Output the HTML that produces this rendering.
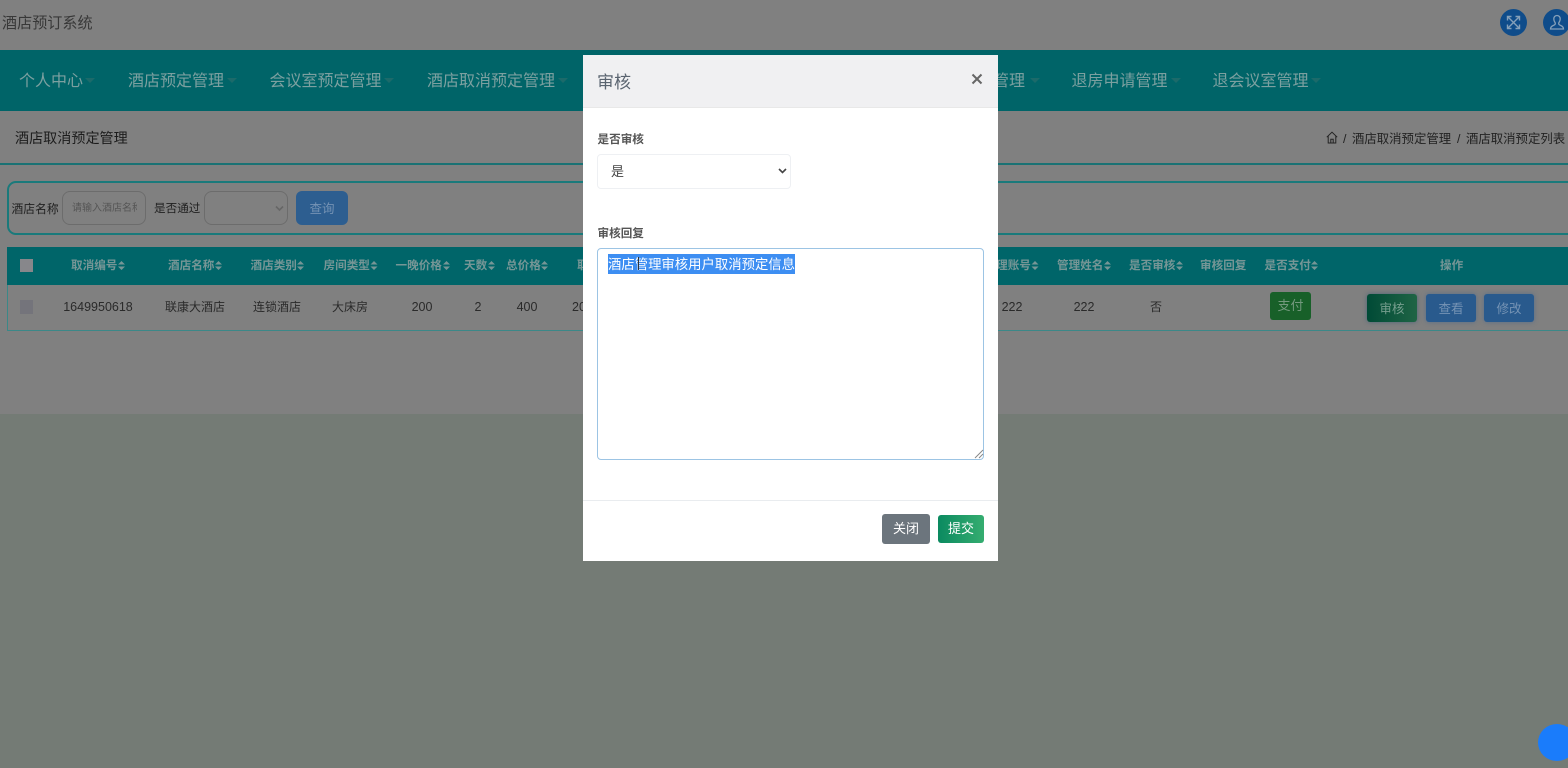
<!DOCTYPE html>
<html lang="zh">
<head>
<meta charset="utf-8">
<title>酒店预订系统</title>
<style>
html,body{margin:0;padding:0;width:1568px;height:768px;overflow:hidden;background:#747b75;}
body{position:relative;font-family:"Liberation Sans","Noto Sans CJK SC",sans-serif;color:#222;}
.a{position:absolute;white-space:nowrap;}
.c{position:absolute;white-space:nowrap;transform:translateX(-50%);}
.nav{font-size:16px;line-height:22px;top:71px;color:#7ca0a0;}
.caret{position:absolute;top:78px;width:0;height:0;border-left:5px solid transparent;border-right:5px solid transparent;border-top:5px solid #1c6a6a;}
.th{font-size:11.6px;font-weight:700;line-height:16px;top:258px;color:#769696;}
.td{font-size:12.5px;line-height:18px;top:298px;color:#2a2a2a;}
.btn{position:absolute;border-radius:3px;text-align:center;font-size:12.5px;box-sizing:border-box;}
.lbl{font-size:11.6px;font-weight:700;color:#555;line-height:16px;}
</style>
</head>
<body>
<!-- page backdrop -->
<div class="a" style="left:0;top:0;width:1568px;height:50px;background:#808080;"></div>
<div class="a" style="left:0;top:49.5px;width:1568px;height:61.5px;background:#006468;"></div>
<div class="a" style="left:0;top:111px;width:1568px;height:303px;background:#808080;"></div>
<div class="a" style="left:0;top:414px;width:1568px;height:354px;background:#747b75;"></div>

<!-- header -->
<div class="a" style="left:2px;top:14px;font-size:15.1px;line-height:20px;color:#383838;">酒店预订系统</div>
<div class="a" style="left:1500px;top:9px;width:27px;height:27px;border-radius:50%;background:#0f4c8a;"></div>
<svg class="a" style="left:1506px;top:15px;" width="15" height="15" viewBox="0 0 15 15" fill="none" stroke="#86a0b9" stroke-width="1.4">
<path d="M2 2L13 13M13 2L2 13M1.5 5.5V1.5H5.5M9.5 1.5H13.5V5.5M13.5 9.5V13.5H9.5M5.5 13.5H1.5V9.5"/>
</svg>
<div class="a" style="left:1543px;top:9px;width:27px;height:27px;border-radius:50%;background:#0f4c8a;"></div>
<svg class="a" style="left:1548px;top:14px;" width="18" height="17" viewBox="0 0 18 17" fill="none" stroke="#86a0b9" stroke-width="1.3">
<path d="M9 1.5C6.8 1.5 5.8 3.2 5.8 5C5.8 7 6.8 8.2 7.3 9C7.5 10 7 10.8 5.5 11.4C3.8 12.1 2.5 12.8 2.5 15H15.5C15.5 12.8 14.2 12.1 12.5 11.4C11 10.8 10.5 10 10.7 9C11.2 8.2 12.2 7 12.2 5C12.2 3.2 11.2 1.5 9 1.5Z"/>
</svg>

<!-- nav -->
<div class="a nav" style="left:19px;">个人中心</div><i class="caret" style="left:85px;"></i>
<div class="a nav" style="left:128px;">酒店预定管理</div><i class="caret" style="left:227px;"></i>
<div class="a nav" style="left:269.5px;">会议室预定管理</div><i class="caret" style="left:384px;"></i>
<div class="a nav" style="left:427px;">酒店取消预定管理</div><i class="caret" style="left:558px;"></i>
<div class="a nav" style="left:961px;">预定管理</div><i class="caret" style="left:1030px;"></i>
<div class="a nav" style="left:1071.5px;">退房申请管理</div><i class="caret" style="left:1171px;"></i>
<div class="a nav" style="left:1212.5px;">退会议室管理</div><i class="caret" style="left:1311px;"></i>

<!-- breadcrumb row -->
<div class="a" style="left:15px;top:129px;font-size:14.1px;line-height:19px;color:#1c1c1c;">酒店取消预定管理</div>
<svg class="a" style="left:1326px;top:131px;" width="12" height="13" viewBox="0 0 12 13" fill="none" stroke="#222" stroke-width="1">
<path d="M.8 6.2L6 1.2L11.2 6.2M2.2 5.2V12H9.8V5.2M4.8 12V8.2H7.2V12"/>
</svg>
<div class="a" style="left:1343px;top:131px;font-size:12.4px;line-height:16px;color:#222;">/</div>
<div class="a" style="left:1352px;top:131px;font-size:12.4px;line-height:16px;color:#222;">酒店取消预定管理</div>
<div class="a" style="left:1457px;top:131px;font-size:12.4px;line-height:16px;color:#222;">/</div>
<div class="a" style="left:1466px;top:131px;font-size:12.4px;line-height:16px;color:#222;">酒店取消预定列表</div>
<div class="a" style="left:0;top:163px;width:1568px;height:2px;background:#1a7274;"></div>

<!-- search box -->
<div class="a" style="left:7px;top:181px;width:1580px;height:54px;box-sizing:border-box;border:2px solid #1a7a7b;border-radius:9px;"></div>
<div class="a" style="left:11.5px;top:201px;font-size:11.8px;line-height:16px;color:#1f1f1f;">酒店名称</div>
<div class="a" style="left:62px;top:191px;width:84px;height:34px;box-sizing:border-box;border:1px solid #6c6c6c;border-radius:8px;"></div>
<div class="a" style="left:72px;top:202px;width:65px;overflow:hidden;font-size:10px;line-height:14px;color:#555;">请输入酒店名称</div>
<div class="a" style="left:154px;top:201px;font-size:11.6px;line-height:16px;color:#1f1f1f;">是否通过</div>
<div class="a" style="left:204px;top:191px;width:84px;height:34px;box-sizing:border-box;border:1px solid #6c6c6c;border-radius:8px;"></div>
<svg class="a" style="left:275px;top:205px;" width="9" height="7" viewBox="0 0 9 7" fill="none" stroke="#666" stroke-width="1.6"><path d="M1 1.5L4.5 5L8 1.5"/></svg>
<div class="btn" style="left:296px;top:191px;width:52px;height:34px;border-radius:6px;background:#2d5e90;color:#7593b4;line-height:36px;">查询</div>

<!-- table -->
<div class="a" style="left:7px;top:247px;width:1570px;height:38px;background:#006569;"></div>
<div class="a" style="left:7px;top:285px;width:1570px;height:46px;box-sizing:border-box;border:1px solid #3b8888;border-top:0;"></div>
<div class="a" style="left:20px;top:259px;width:13px;height:13px;background:#87878b;"></div>
<div class="a" style="left:20px;top:300px;width:13px;height:14px;background:#74747b;"></div>

<div class="a th" style="left:71px;">取消编号</div>
<div class="a th" style="left:168px;">酒店名称</div>
<div class="a th" style="left:250.5px;">酒店类别</div>
<div class="a th" style="left:323.5px;">房间类型</div>
<div class="a th" style="left:395.5px;">一晚价格</div>
<div class="a th" style="left:464px;">天数</div>
<div class="a th" style="left:506px;">总价格</div>
<div class="a th" style="left:577px;">取</div>
<div class="a th" style="left:984.5px;">管理账号</div>
<div class="a th" style="left:1057px;">管理姓名</div>
<div class="a th" style="left:1129px;">是否审核</div>
<div class="a th" style="left:1200px;">审核回复</div>
<div class="a th" style="left:1264.5px;">是否支付</div>
<div class="a th" style="left:1440px;">操作</div>
<!-- sort arrows -->
<svg class="a" style="left:0;top:247px;" width="1568" height="38" fill="#769696">
<path d="M118 17.5l3.5-3.5 3.5 3.5zM118 19.5l3.5 3.5 3.5-3.5z"/>
<path d="M215 17.5l3.5-3.5 3.5 3.5zM215 19.5l3.5 3.5 3.5-3.5z"/>
<path d="M297 17.5l3.5-3.5 3.5 3.5zM297 19.5l3.5 3.5 3.5-3.5z"/>
<path d="M370.5 17.5l3.5-3.5 3.5 3.5zM370.5 19.5l3.5 3.5 3.5-3.5z"/>
<path d="M443 17.5l3.5-3.5 3.5 3.5zM443 19.5l3.5 3.5 3.5-3.5z"/>
<path d="M488 17.5l3.5-3.5 3.5 3.5zM488 19.5l3.5 3.5 3.5-3.5z"/>
<path d="M541 17.5l3.5-3.5 3.5 3.5zM541 19.5l3.5 3.5 3.5-3.5z"/>
<path d="M1031.5 17.5l3.5-3.5 3.5 3.5zM1031.5 19.5l3.5 3.5 3.5-3.5z"/>
<path d="M1104 17.5l3.5-3.5 3.5 3.5zM1104 19.5l3.5 3.5 3.5-3.5z"/>
<path d="M1176 17.5l3.5-3.5 3.5 3.5zM1176 19.5l3.5 3.5 3.5-3.5z"/>
<path d="M1311 17.5l3.5-3.5 3.5 3.5zM1311 19.5l3.5 3.5 3.5-3.5z"/>
</svg>

<div class="c td" style="left:98px;">1649950618</div>
<div class="c td" style="left:195px;font-size:12px;">联康大酒店</div>
<div class="c td" style="left:277px;font-size:12px;">连锁酒店</div>
<div class="c td" style="left:350px;font-size:12px;">大床房</div>
<div class="c td" style="left:422px;">200</div>
<div class="c td" style="left:478px;">2</div>
<div class="c td" style="left:527px;">400</div>
<div class="a td" style="left:572px;">20</div>
<div class="c td" style="left:1012px;">222</div>
<div class="c td" style="left:1084px;">222</div>
<div class="c td" style="left:1156px;font-size:12px;">否</div>
<div class="btn" style="left:1270px;top:292px;width:41px;height:28px;background:#186029;color:#74997e;line-height:28px;font-size:13px;">支付</div>
<div class="btn" style="left:1367px;top:294px;width:50px;height:28px;background:linear-gradient(90deg,#004a36,#1f6445);color:#769e8e;line-height:31px;box-shadow:0 0 5px rgba(20,70,110,.5);">审核</div>
<div class="btn" style="left:1426px;top:294px;width:50px;height:28px;background:#295a8d;color:#7593b4;line-height:31px;box-shadow:0 0 5px rgba(40,90,150,.5);">查看</div>
<div class="btn" style="left:1484px;top:294px;width:50px;height:28px;background:#295a8d;color:#7593b4;line-height:31px;box-shadow:0 0 5px rgba(40,90,150,.5);">修改</div>

<!-- floating blue dot -->
<div class="a" style="left:1538px;top:724px;width:38px;height:37px;border-radius:50%;background:#1a7cfb;"></div>

<!-- modal -->
<div class="a" style="left:583px;top:55px;width:415px;height:506px;background:#fff;overflow:hidden;">
  <div class="a" style="left:0;top:0;width:415px;height:52px;background:#f0f0f2;border-bottom:1px solid #e8e8e8;box-sizing:content-box;"></div>
  <div class="a" style="left:14px;top:16px;font-size:17px;line-height:24px;color:#5a6470;">审核</div>
  <svg class="a" style="left:388px;top:18px;" width="12" height="12" viewBox="0 0 12 12" fill="none" stroke="#666" stroke-width="2"><path d="M1.5 1.5L10.5 10.5M10.5 1.5L1.5 10.5"/></svg>

  <div class="a lbl" style="left:14.5px;top:77px;">是否审核</div>
  <div class="a" style="left:14px;top:99px;width:194px;height:35px;box-sizing:border-box;border:1px solid #eef0f3;border-radius:4px;background:#fff;"></div>
  <div class="a" style="left:28px;top:107px;font-size:13px;line-height:19px;color:#444;">是</div>
  <svg class="a" style="left:195px;top:113px;" width="9" height="6" viewBox="0 0 9 6" fill="none" stroke="#444" stroke-width="1.6"><path d="M1 1L4.5 4.5L8 1"/></svg>

  <div class="a lbl" style="left:14.5px;top:171px;">审核回复</div>
  <div class="a" style="left:14px;top:193px;width:387px;height:212px;box-sizing:border-box;border:1px solid #9cc4e4;border-radius:4px;background:#fff;"></div>
  <div class="a" style="left:25px;top:199px;width:187px;height:20px;background:#3d8ef2;color:#fff;font-size:13.36px;line-height:21px;overflow:hidden;">酒店管理审核用户取消预定信息</div>
  <div class="a" style="left:54.5px;top:202px;width:1.5px;height:13px;background:#333;"></div>
  <svg class="a" style="left:391px;top:394px;" width="10" height="10" viewBox="0 0 10 10" fill="none" stroke="#888" stroke-width="1"><path d="M1 9L9 1M5 9L9 5"/></svg>

  <div class="a" style="left:0;top:445px;width:415px;height:1px;background:#e9ecef;"></div>
  <div class="btn" style="left:299px;top:459px;width:48px;height:30px;background:#6c757d;color:#fff;line-height:30px;font-size:13px;">关闭</div>
  <div class="btn" style="left:355px;top:460px;width:46px;height:28px;background:linear-gradient(90deg,#0b8a60,#35ad70);color:#fff;line-height:28px;font-size:13px;">提交</div>
</div>
</body>
</html>
